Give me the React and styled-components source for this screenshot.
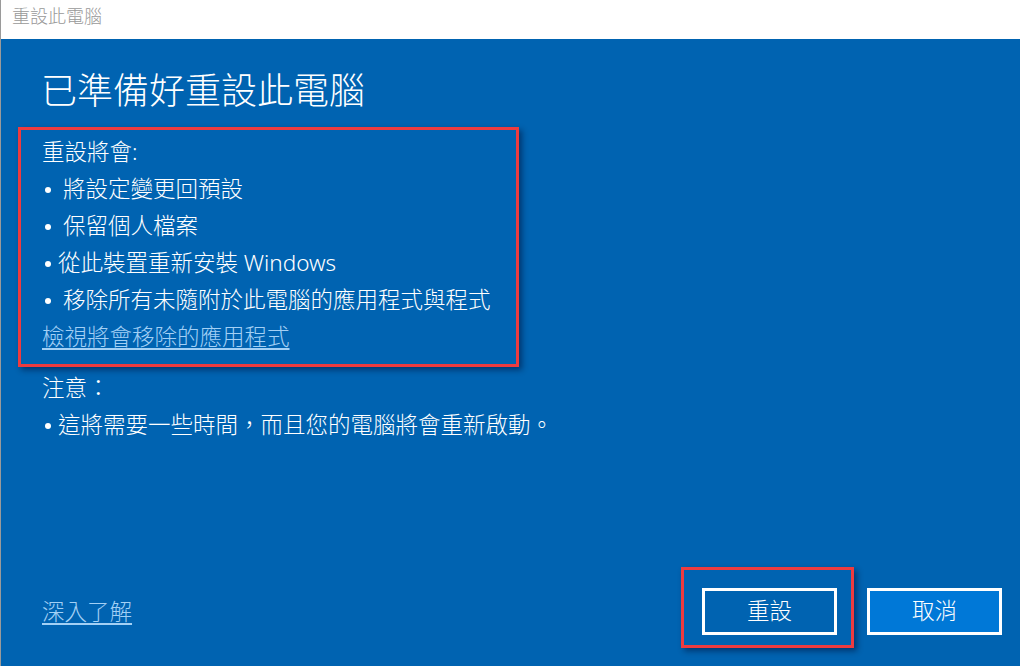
import React from "react";
import styled, { createGlobalStyle } from "styled-components";

const Global = createGlobalStyle`
  html, body { margin: 0; padding: 0; background: #0063b1; }
  body { font-family: "Noto Sans", "Noto Sans CJK TC", sans-serif; }
`;

const Window = styled.div`
  width: 1020px;
  height: 666px;
  box-sizing: border-box;
  border-left: 1px solid #9a9a9a;
  background: #0063b1;
  display: flex;
  flex-direction: column;
  overflow: hidden;
`;

const TitleBar = styled.div`
  height: 39px;
  flex: none;
  background: #ffffff;
  box-sizing: border-box;
  padding: 7px 0 0 11px;
  font-size: 18px;
  line-height: 19px;
  color: #999999;
  font-weight: 300;
`;

const Main = styled.div`
  flex: 1;
  display: flex;
  flex-direction: column;
  padding: 34px 0 0 41px;
  color: #ffffff;
`;

const Heading = styled.h1`
  margin: 0 0 18px -1px;
  font-size: 36px;
  line-height: 36px;
  font-weight: 300;
`;

const Highlight = styled.div`
  width: 501px;
  box-sizing: border-box;
  margin-left: -24px;
  border: 3px solid #ee3b3f;
  padding: 3px 0 9px 21px;
  box-shadow: 3px 3px 6px rgba(0, 0, 30, 0.45);
`;

const Line = styled.div`
  font-size: 22.5px;
  line-height: 37px;
  font-weight: 300;
  white-space: nowrap;
  display: flex;
  align-items: center;
  margin-top: ${(p) => p.$gap || 0}px;
`;

const Dot = styled.span`
  flex: none;
  width: ${(p) => (p.$wide ? 21 : 16)}px;
  display: flex;
  align-items: center;
  padding-left: 3px;
  box-sizing: border-box;
  &::before {
    content: "";
    width: 6px;
    height: 6px;
    margin-top: 3px;
    border-radius: 50%;
    background: #ffffff;
  }
`;

const Link = styled.a`
  color: #a3d0f5;
  text-decoration: underline;
  text-underline-offset: 3px;
  text-decoration-thickness: 1.5px;
  cursor: pointer;
  font-size: 22.5px;
  line-height: 37px;
  font-weight: 300;
`;

const Footer = styled.div`
  margin-top: auto;
  display: flex;
  align-items: center;
  padding: 0 18px 31px 0;
`;

const Buttons = styled.div`
  margin-left: auto;
  display: flex;
  align-items: center;
  gap: 30px;
`;

const ButtonMark = styled.div`
  border: 3px solid #ee3b3f;
  padding: 18px 14px 10px 18px;
  margin: -21px -17px -13px -21px;
  box-shadow: 3px 3px 6px rgba(0, 0, 30, 0.45);
  display: flex;
`;

const Button = styled.button`
  width: 135px;
  height: 47px;
  box-sizing: border-box;
  border: 3px solid #ffffff;
  background: ${(p) => (p.$accent ? "#0078d7" : "#0063b1")};
  color: #ffffff;
  font-family: inherit;
  font-size: 22.5px;
  font-weight: 300;
  line-height: 1;
  padding: 0;
  cursor: pointer;
`;

const items = [
  { text: "將設定變更回預設", wide: true },
  { text: "保留個人檔案", wide: true },
  { text: "從此裝置重新安裝 Windows", wide: false },
  { text: "移除所有未隨附於此電腦的應用程式與程式", wide: true },
];

export default function App() {
  return (
    <>
      <Global />
      <Window>
        <TitleBar>重設此電腦</TitleBar>
        <Main>
          <Heading>已準備好重設此電腦</Heading>
          <Highlight>
            <Line>重設將會:</Line>
            {items.map((it) => (
              <Line key={it.text}>
                <Dot $wide={it.wide} />
                {it.text}
              </Line>
            ))}
            <Line>
              <Link>檢視將會移除的應用程式</Link>
            </Line>
          </Highlight>
          <Line $gap={2}>注意：</Line>
          <Line>
            <Dot />
            這將需要一些時間，而且您的電腦將會重新啟動。
          </Line>
          <Footer>
            <Link>深入了解</Link>
            <Buttons>
              <ButtonMark>
                <Button>重設</Button>
              </ButtonMark>
              <Button $accent>取消</Button>
            </Buttons>
          </Footer>
        </Main>
      </Window>
    </>
  );
}
